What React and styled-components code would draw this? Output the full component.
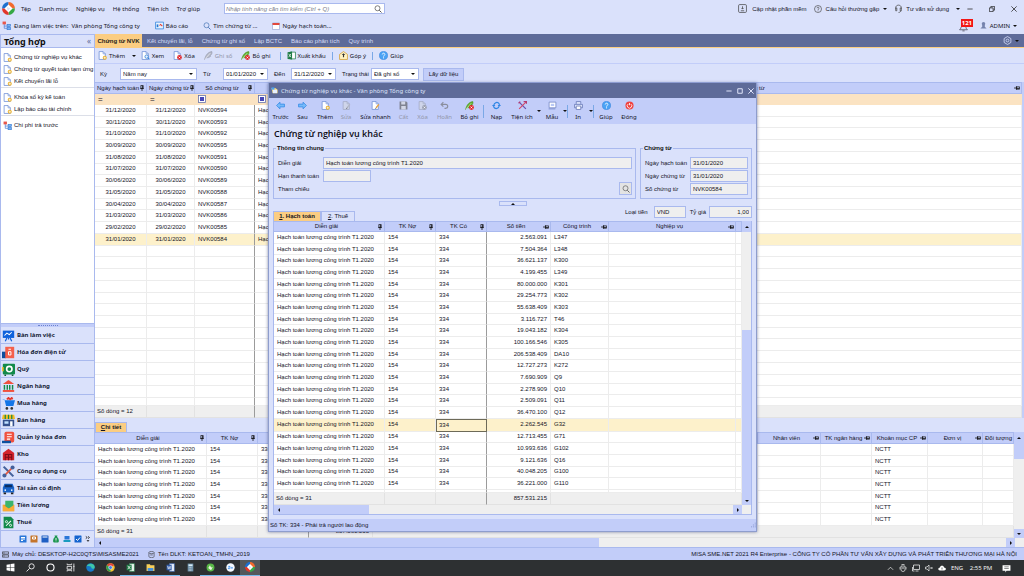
import React from "react";
import styled, { createGlobalStyle, css } from "styled-components";

const c = {
  light: "#dae1fb",
  blue: "#c2cdf9",
  line: "#a9b9ee",
  navy: "#5e6b99",
  orange: "#fbcd82",
  filter: "#fbe3c2",
  picked: "#fdf1cb",
  grey: "#efefef",
  cell: "#ececec",
  text: "#14141f",
  dim: "#9297ab",
};
const sans = `"Liberation Sans", Arial, sans-serif`;
const ui = `"Noto Sans", "Open Sans", sans-serif`;

const Global = createGlobalStyle`
  * { box-sizing: border-box; }
  body { margin: 0; background: ${c.light}; }
  button, input, select { font: inherit; color: inherit; margin: 0; }
  button { background: none; border: 0; padding: 0; white-space: nowrap; }
  svg { display: block; flex: none; }
`;

/* ---------- shell ---------- */
const Shell = styled.div`
  position: relative;
  display: flex;
  flex-direction: column;
  min-height: 100vh;
  overflow: hidden;
  background: ${c.light};
  color: ${c.text};
  font: 6px/10px ${sans};
`;
const TopRow = styled.div`
  display: flex;
  align-items: center;
  height: 17px;
  padding: 0 7px 0 2px;
  white-space: nowrap;
  font-family: ${ui};
`;
const MenuBar = styled.nav`
  display: flex;
  gap: 8px;
  margin-left: 6px;
  width: 203px;
`;
const SearchBox = styled.label`
  display: flex;
  align-items: center;
  width: 161px;
  height: 11px;
  padding: 0 2px 0 1px;
  background: #fff;
  border: 1px solid ${c.line};
  font-family: ${sans};
  input {
    flex: 1;
    min-width: 0;
    height: 9px;
    padding: 0;
    border: 0;
    outline: 0;
    font-style: italic;
  }
  input::placeholder { color: #777b8a; }
`;
const Group = styled.div`
  display: flex;
  align-items: center;
  gap: ${(p) => p.$gap || 0}px;
  margin-left: ${(p) => (p.$end ? "auto" : "0")};
`;
const SupportGroup = styled(Group)`
  font-family: ${sans};
`;
const IconButton = styled.button`
  display: flex;
  align-items: center;
  gap: ${(p) => p.$gap || 2}px;
  color: ${(p) => (p.disabled ? c.dim : "inherit")};
`;
const Caret = styled.i`
  flex: none;
  width: 0;
  height: 0;
  border: 2px solid transparent;
  border-bottom-width: 0;
  border-top-color: #111;
  ${(p) => p.$dir === "up" && css`transform: rotate(180deg);`}
  ${(p) => p.$dir === "left" && css`transform: rotate(90deg);`}
  ${(p) => p.$dir === "right" && css`transform: rotate(-90deg);`}
`;
const Bell = styled.span`
  position: relative;
  width: 22px;
  height: 14px;
  svg { position: absolute; left: 1px; top: 4px; }
  b {
    position: absolute;
    left: 3px;
    top: 0;
    padding: 0 1px;
    background: #f21616;
    color: #fff;
    font: bold 6px/8px ${ui};
  }
`;
const Main = styled.div`
  flex: 1;
  display: grid;
  grid-template-columns: 95px minmax(0, 1fr);
`;

/* ---------- sidebar ---------- */
const Side = styled.aside`
  display: flex;
  flex-direction: column;
  background: #fff;
  border: solid ${c.line};
  border-width: 1px 1px 0 1px;
`;
const SideHead = styled.h2`
  display: flex;
  align-items: center;
  justify-content: space-between;
  height: 13px;
  margin: 0;
  padding: 0 3px;
  background: ${c.light};
  color: #111;
  font: bold 9px/13px ${ui};
  border-bottom: 1px solid ${c.line};
  span { color: ${c.navy}; font: 8px/12px ${ui}; }
`;
const SideGroup = styled.div`
  padding: 3px 0 0 2px;
  border-bottom: ${(p) => (p.$last ? "0" : "1px solid #dcdfe8")};
`;
const SideLink = styled.a`
  display: flex;
  align-items: center;
  gap: 2px;
  height: 12px;
  color: ${c.text};
  text-decoration: none;
  white-space: nowrap;
`;
const Spacer = styled.div`
  flex: 1;
`;
const Grip = styled.div`
  display: flex;
  justify-content: center;
  height: 4px;
  padding-top: 1px;
  background: ${c.blue};
  border-top: 1px solid ${c.line};
  &::after { content: ""; width: 20px; border-top: 1px dotted #6c82cf; }
`;
const ModuleButton = styled.button`
  display: flex;
  align-items: center;
  gap: 2px;
  height: 17px;
  padding-left: 1px;
  background: ${c.light};
  border-bottom: 1px solid ${c.line};
  color: #151c36;
  font: bold 6px/10px ${ui};
  text-align: left;
`;
const MiniBar = styled.div`
  display: flex;
  justify-content: flex-end;
  align-items: center;
  gap: 3px;
  height: 16px;
  padding: 0 3px 0 0;
  background: ${c.light};
`;

/* ---------- workspace ---------- */
const Work = styled.main`
  display: flex;
  flex-direction: column;
  min-width: 0;
`;
const TabBar = styled.div`
  display: flex;
  align-items: center;
  gap: 9px;
  height: 14px;
  padding-right: 5px;
  background: ${c.navy};
  color: #d5dcf7;
  border-bottom: 1px solid ${c.orange};
`;
const MainTab = styled.button`
  height: 13px;
  ${(p) =>
    p.$on &&
    css`
      width: 47px;
      margin-right: -4px;
      background: ${c.orange};
      color: #1d1d1d;
      font-weight: bold;
    `}
`;
const Tools = styled.div`
  display: flex;
  align-items: center;
  gap: 9px;
  height: 16px;
  padding-left: 3px;
  border-bottom: 1px solid ${c.blue};
  font-family: ${ui};
`;
const Bar = styled.i`
  width: 1px;
  height: ${(p) => p.$h || 8}px;
  background: #7ba8e6;
`;
const Filters = styled.form`
  display: flex;
  align-items: center;
  gap: 6px;
  height: 18px;
  padding: 2px 0 0 5px;
`;
const Field = styled.label`
  display: flex;
  align-items: center;
  span { width: ${(p) => p.$label}px; white-space: nowrap; }
`;
const SelectBox = styled.div`
  display: flex;
  align-items: center;
  width: ${(p) => p.$w}px;
  height: 12px;
  padding-right: 3px;
  background: #fff;
  border: 1px solid ${c.line};
  select {
    flex: 1;
    min-width: 0;
    height: 10px;
    padding: 0 0 0 2px;
    border: 0;
    outline: 0;
    appearance: none;
    background: transparent;
  }
`;
const LoadButton = styled.button`
  width: 41px;
  height: 13px;
  margin-left: -2px;
  background: ${c.blue};
  border: 1px solid ${c.line};
`;

/* ---------- data tables ---------- */
const Grid = styled.table`
  width: 100%;
  height: ${(p) => p.$h}px;
  table-layout: fixed;
  border-collapse: separate;
  border-spacing: 0;
  background: #fff;
  th, td {
    padding: 0 3px;
    overflow: hidden;
    white-space: nowrap;
    text-align: left;
    font-weight: normal;
    line-height: 9px;
    border-right: 1px solid ${c.cell};
    border-bottom: 1px solid ${c.cell};
  }
  thead th {
    height: ${(p) => p.$head}px;
    padding: 0 2px;
    background: ${c.blue};
    border-color: ${c.line};
    border-top: 1px solid ${c.line};
  }
  tfoot td {
    height: 12px;
    padding-left: 2px;
    background: ${c.grey};
    border-color: #e2e2e2;
  }
`;
const HeadCell = styled.div`
  display: flex;
  align-items: center;
  margin-right: -1px;
  span { flex: 1; text-align: center; }
`;
const Cell = styled.td`
  && {
    ${(p) => p.$align && css`text-align: ${p.$align};`}
    ${(p) => p.$dark && css`border-right-color: #9b9b9b;`}
    ${(p) => p.$focus && css`border: 1px solid #6d6a58; padding-left: 2px;`}
  }
`;
const Row = styled.tr`
  background: ${(p) => (p.$on ? c.picked : "transparent")};
`;
const FilterRow = styled.tr`
  background: ${c.filter};
  && td { height: 11px; border-color: ${c.filter}; font-size: 8px; }
`;
const FillRow = styled.tr`
  && td { height: ${(p) => p.$h}px; line-height: 1px; }
`;
const LeadTable = styled.div`
  border-right: 2px solid ${c.blue};
`;

const DetailTabs = styled.div`
  display: flex;
  align-items: flex-end;
  height: 14px;
`;
const TabLabel = styled.button`
  height: 10px;
  width: ${(p) => p.$w}px;
  border: 1px solid ${c.line};
  border-bottom: 0;
  background: ${(p) => (p.$on ? c.orange : c.light)};
  font-weight: ${(p) => (p.$on ? "bold" : "normal")};
  line-height: 9px;
`;
const Scrolled = styled.div`
  display: flex;
  flex: ${(p) => (p.$grow ? 1 : "none")};
  > :first-child { flex: 1; min-width: 0; }
`;
const VScroll = styled.div`
  display: flex;
  flex-direction: column;
  width: ${(p) => p.$w}px;
  background: ${c.grey};
`;
const HScroll = styled.div`
  display: flex;
  height: 9px;
  background: ${c.grey};
  padding-right: 9px;
`;
const Arrow = styled.button`
  display: flex;
  align-items: center;
  justify-content: center;
  width: ${(p) => p.$w || 9}px;
  height: ${(p) => p.$h || 9}px;
  background: ${c.blue};
`;
const Thumb = styled.i`
  flex: 0 0 ${(p) => p.$size};
  margin-top: ${(p) => p.$from || 0}px;
  background: ${c.blue};
`;

/* ---------- voucher window ---------- */
const Window = styled.section`
  position: absolute;
  left: 268px;
  right: 267px;
  top: 83px;
  display: flex;
  flex-direction: column;
  background: ${c.light};
  border: solid #8e9dcd;
  border-width: 0 1px 1px 1px;
  box-shadow: 0 0 3px rgba(50, 60, 110, 0.6);
`;
const TitleBar = styled.header`
  display: flex;
  align-items: center;
  gap: 3px;
  height: 15px;
  padding: 0 2px;
  background: ${c.navy};
  color: #dde3fa;
  font-family: ${ui};
`;
const Ribbon = styled.div`
  display: flex;
  height: 26px;
  padding-left: 1px;
  background: ${c.blue};
  align-items: center;
`;
const RibbonButton = styled.button`
  display: flex;
  flex-direction: column;
  align-items: center;
  gap: 2px;
  width: ${(p) => p.$w}px;
  color: ${(p) => (p.disabled ? c.dim : "inherit")};
  font-family: ${ui};
`;
const RibbonCaret = styled.button`
  display: flex;
  justify-content: center;
  width: ${(p) => p.$w}px;
`;
const Body = styled.div`
  padding: 0 4px 4px;
`;
const Heading = styled.h1`
  height: 20px;
  margin: 0;
  padding-left: 1px;
  color: #0c0c14;
  font: 600 9px/20px "Open Sans", ${ui};
`;
const Panels = styled.div`
  display: grid;
  grid-template-columns: minmax(0, 1fr) 112px;
  gap: 4px;
`;
const Panel = styled.fieldset`
  min-width: 0;
  height: 55px;
  margin: 0;
  padding: 4px 3px 0 4px;
  border: 1px solid ${c.line};
  legend { padding: 0 1px; margin-left: -2px; color: #111; font-weight: bold; line-height: 8px; }
`;
const FormRow = styled.div`
  display: grid;
  grid-template-columns: ${(p) => p.$label}px minmax(0, 1fr);
  align-items: center;
  height: 13px;
  white-space: nowrap;
`;
const Box = styled.input`
  width: ${(p) => p.$w || "100%"};
  height: 12px;
  padding: 0 2px;
  background: ${c.grey};
  border: 1px solid ${c.line};
  text-align: ${(p) => p.$align || "left"};
`;
const LookButton = styled.button`
  display: flex;
  align-items: center;
  justify-content: center;
  justify-self: end;
  width: 13px;
  height: 13px;
  background: #e3e3e3;
  border: 1px solid ${c.line};
`;
const Splitter = styled.div`
  display: flex;
  justify-content: center;
  align-items: flex-end;
  height: 7px;
  button {
    display: flex;
    align-items: center;
    justify-content: center;
    width: 28px;
    height: 5px;
    border: 1px solid ${c.line};
  }
`;
const SheetBar = styled.div`
  display: flex;
  align-items: flex-end;
  height: 15px;
`;
const Currency = styled.div`
  display: flex;
  gap: 4px;
  margin: 0 0 3px auto;
  label { display: flex; align-items: center; gap: 3px; }
  label:first-child { gap: 6px; }
`;
const Frame = styled.div`
  border: solid ${c.line};
  border-width: 0 1px 1px 1px;
`;
const WindowStatus = styled.footer`
  display: flex;
  align-items: center;
  justify-content: space-between;
  height: 12px;
  padding-left: 1px;
  background: ${c.blue};
`;

/* ---------- bottom bars ---------- */
const StatusBar = styled.footer`
  display: flex;
  align-items: center;
  gap: 3px;
  height: 13px;
  padding: 0 7px 0 2px;
  background: ${c.blue};
  border-top: 1px solid ${c.line};
  white-space: nowrap;
  span { margin-right: 6px; }
  span:last-child { margin: 0 0 0 auto; }
`;
const TaskBar = styled.footer`
  display: flex;
  align-items: center;
  height: 16px;
  background: #2d3032;
  color: #f2f2f2;
  font-family: ${ui};
`;
const TaskButton = styled.button`
  display: flex;
  align-items: center;
  justify-content: center;
  width: 20px;
  height: 16px;
  padding-bottom: 1px;
  border-bottom: 1px solid ${(p) => (p.$open ? "#76b9ed" : "transparent")};
  background: ${(p) => (p.$on ? "#53585c" : "transparent")};
`;
const Tray = styled.div`
  display: flex;
  align-items: center;
  gap: 5px;
  margin-left: auto;
  padding-right: 13px;
`;

/* ---------- drawings ---------- */
const Svg = ({ s = 8, w, children, ...r }) => (
  <svg width={w || s} height={s} viewBox="0 0 16 16" fill="none" aria-hidden="true" {...r}>{children}</svg>
);
const Doc = ({ mark = "plus", off }) => (
  <Svg s={9}>
    <path d="M2 1h7l4 4v10H2z" fill={off ? "#cfd5ea" : "#fff"} stroke={off ? "#a3abc6" : "#6f8fd6"} strokeWidth="1.4" />
    <path d="M9 1v4h4" stroke={off ? "#a3abc6" : "#6f8fd6"} strokeWidth="1.2" />
    {mark === "plus" && <><circle cx="12" cy="12" r="3.6" fill={off ? "#a3a8b8" : "#e9b02c"} /><path d="M12 10v4M10 12h4" stroke="#fff" strokeWidth="1.2" /></>}
    {mark === "look" && <><circle cx="10" cy="10" r="3" fill="#e6f2ff" stroke="#2f7fd6" strokeWidth="1.4" /><path d="M12 12l3 3" stroke="#2f7fd6" strokeWidth="1.8" /></>}
    {mark === "del" && <><circle cx="11.5" cy="11.5" r="4.2" fill={off ? "#9aa0b3" : "#e3262c"} /><path d="M10 10l3 3M13 10l-3 3" stroke="#fff" strokeWidth="1.3" /></>}
    {mark === "pen" && <><path d="M14 6l-5 6" stroke={off ? "#b3b8c8" : "#eaa33a"} strokeWidth="2.4" /><path d="M9 12l-1 2" stroke="#555" strokeWidth="1.4" /></>}
  </Svg>
);
const Tree = () => (
  <Svg s={9}>
    <path d="M4 5v8h5M4 9h5" stroke="#4d7fd6" strokeWidth="1.3" />
    <rect x="1" y="1" width="6" height="5" fill="#e8574a" />
    <rect x="9" y="6" width="6" height="4" fill="#74b3f3" stroke="#2a6fce" />
    <rect x="9" y="11.5" width="6" height="4" fill="#74b3f3" stroke="#2a6fce" />
  </Svg>
);
const Quill = ({ off }) => (
  <Svg s={9}>
    <path d="M1 15C3 7 7 2 14 1c1 4-1 6-3 7l1 1c-2 3-5 3-8 3z" fill={off ? "#b5b9c8" : "#5fae2e"} stroke={off ? "#9196a8" : "#4f9a24"} />
    <path d="M2 14L11 4" stroke="#fff" />
    {!off && <><circle cx="11.5" cy="11.5" r="4.3" fill="#e3262c" /><path d="M9.8 9.8l3.4 3.4M13.2 9.8l-3.4 3.4" stroke="#fff" strokeWidth="1.4" /></>}
  </Svg>
);
const Help = ({ s = 8 }) => (
  <Svg s={s}><circle cx="8" cy="8" r="7.2" fill="#4ba3f5" stroke="#2f7fdb" /><path d="M5.8 6.2c0-3 4.6-3 4.6 0C10.4 8 8 8 8 10" stroke="#fff" strokeWidth="1.5" /><circle cx="8" cy="12.2" r="1" fill="#fff" /></Svg>
);
const Lens = ({ s = 8, color = "#4e79b8" }) => (
  <Svg s={s}><circle cx="7" cy="6.5" r="5" stroke={color} strokeWidth="1.5" /><path d="M10.5 10.5L15 15" stroke={color} strokeWidth="2" /></Svg>
);
const Logo = ({ s = 13 }) => (
  <Svg s={s}>
    <path d="M8 8L8 0A8 8 0 0 0 0 8z" fill="#1c6fd0" /><path d="M8 8L8 0A8 8 0 0 1 16 8z" fill="#f26a2e" />
    <path d="M8 8H16A8 8 0 0 1 8 16z" fill="#36a845" /><path d="M8 8H0A8 8 0 0 0 8 16z" fill="#e2372c" />
    <path d="M8 3l5 5-5 5-5-5z" fill="#fff" /><path d="M6 6l4 2-3 3z" fill="#dae1fb" />
  </Svg>
);
const Arr = ({ flip }) => (
  <Svg s={9}><path d={flip ? "M15 8L9 2v3.5H1v5h8V14z" : "M1 8L7 2v3.5h8v5H7V14z"} fill="#76bafa" stroke="#2f86e4" strokeWidth="1.3" /></Svg>
);
const Pin = ({ side }) => (
  <Svg s={6}>
    <g transform={side ? "rotate(90 8 8)" : undefined}>
      <path d="M5 1h6v8H5z" stroke="#111" strokeWidth="2" /><path d="M3 9.5h10M8 10v6M9.5 2v7" stroke="#111" strokeWidth="2" />
    </g>
  </Svg>
);
const FilterMark = () => (
  <Svg><rect x="1" y="1" width="14" height="14" fill="#fff" stroke="#5b6aa8" strokeWidth="1.5" /><rect x="4" y="4" width="8" height="8" fill="#4747b8" /></Svg>
);
const Mini = ({ color, d }) => <Svg s={8}><rect x="1" y="1" width="14" height="14" rx="1" fill={color} /><path d={d} stroke="#fff" strokeWidth="2" /></Svg>;

const moduleArt = {
  desk: <><rect x="1" y="2" width="14" height="9" fill="#0f62dc" /><path d="M3 8l3-3 3 2 3-3" stroke="#fff" strokeWidth="1.3" /><path d="M8 11v2M4 15l2-4M12 15l-2-4" stroke="#0f62dc" strokeWidth="1.5" /></>,
  einv: <><rect x="0" y="7" width="5" height="8" fill="#0d4f9e" /><rect x="4" y="1" width="11" height="14" fill="#f4604c" /><path d="M8 4h3M8 7h3v4H8z" stroke="#fff" strokeWidth="1.2" /></>,
  safe: <><rect x="1" y="1" width="15" height="13" rx="1" fill="#128a4a" /><circle cx="9" cy="7.5" r="3.3" stroke="#fff" strokeWidth="2" /><path d="M0 5h2v5H0" fill="#f6c132" /><path d="M3 14h2v2H3zM12 14h2v2h-2z" fill="#0b5c30" /></>,
  bank: <><path d="M8 0l7 5H1z" fill="#f0513f" /><path d="M3 6v6M6.500 6v6M9.500 6v6M13 6v6" stroke="#128a4a" strokeWidth="1.8" /><path d="M1 13.5h14" stroke="#f0513f" strokeWidth="2.4" /></>,
  cart: <><path d="M0 3h3l2 8h9l2-7H4z" fill="#1476e8" /><path d="M6 3l2-2 2 2 2-2 1 2" stroke="#e2372c" strokeWidth="2" /><circle cx="6" cy="14" r="1.6" fill="#333" /><circle cx="12" cy="14" r="1.6" fill="#333" /></>,
  shop: <><path d="M1 1h14l1 5H0z" fill="#f5b921" /><path d="M4 1v5M8 1v5M12 1v5" stroke="#128a4a" strokeWidth="1.5" /><rect x="1" y="7" width="14" height="8" fill="#35508c" /><rect x="3" y="9" width="5" height="3" fill="#bfe0ff" /><rect x="10" y="9" width="3" height="6" fill="#fff" /></>,
  inv: <><rect x="3" y="1" width="12" height="13" rx="2" fill="#f0513f" /><path d="M6 4h6M6 7h6M6 10h4" stroke="#fff" strokeWidth="1.3" /><path d="M0 12h11v3H0z" fill="#0d4f9e" /></>,
  ware: <><path d="M8 1l7 5v9H1V6z" fill="#d3242c" /><path d="M4 15V8h8v7M4 11.5h8M8 8v7" stroke="#7c0c18" strokeWidth="1.3" /></>,
  tool: <><path d="M2 2l12 12" stroke="#44619c" strokeWidth="2.6" /><path d="M14 2L3 13" stroke="#e4593f" strokeWidth="2" /><circle cx="13" cy="3" r="2.5" fill="#44619c" /><circle cx="3" cy="13" r="2.5" fill="#44619c" /></>,
  car: <><path d="M3 2h10l2 5v6H1V7z" fill="#1763c9" /><path d="M4 3.5h8l1 3H3z" fill="#0a2f66" /><path d="M2 13h3v2H2zM11 13h3v2h-3z" fill="#222" /><circle cx="4" cy="10" r="1" fill="#fff" /><circle cx="12" cy="10" r="1" fill="#fff" /></>,
  pay: <><path d="M1 7h14v8H1z" fill="#f39a1e" /><path d="M4 2h10v8l-5 2-5-3z" fill="#3bb46c" /><path d="M1 7l7 5 7-5v8H1z" fill="#f8ac38" /></>,
  tax: <><path d="M2 1h9l3 3v11H2z" fill="#128a4a" /><path d="M5 12l6-6" stroke="#fff" strokeWidth="1.3" /><circle cx="5.5" cy="7" r="1.3" stroke="#fff" /><circle cx="10.5" cy="11.5" r="1.3" stroke="#fff" /></>,
};

/* ---------- data ---------- */
const modules = [
  ["desk", "Bàn làm việc"], ["einv", "Hóa đơn điện tử"], ["safe", "Quỹ"], ["bank", "Ngân hàng"],
  ["cart", "Mua hàng"], ["shop", "Bán hàng"], ["inv", "Quản lý hóa đơn"], ["ware", "Kho"],
  ["tool", "Công cụ dụng cụ"], ["car", "Tài sản cố định"], ["pay", "Tiền lương"], ["tax", "Thuế"],
];
const vouchers = [
  ["31/12/2020", "NVK00594"], ["30/11/2020", "NVK00593"], ["31/10/2020", "NVK00592"], ["30/09/2020", "NVK00595"],
  ["31/08/2020", "NVK00591"], ["31/07/2020", "NVK00590"], ["30/06/2020", "NVK00589"], ["31/05/2020", "NVK00588"],
  ["30/04/2020", "NVK00587"], ["31/03/2020", "NVK00586"], ["29/02/2020", "NVK00585"], ["31/01/2020", "NVK00584"],
];
const entries = [
  ["2.563.091", "L347"], ["7.504.364", "L348"], ["36.621.137", "K300"], ["4.199.455", "L349"], ["80.000.000", "K301"],
  ["29.254.773", "K302"], ["55.638.409", "K303"], ["3.116.727", "T46"], ["19.043.182", "K304"], ["100.166.546", "K305"],
  ["206.538.409", "DA10"], ["12.727.273", "K272"], ["7.690.909", "Q9"], ["2.278.909", "Q10"], ["2.509.091", "Q11"],
  ["36.470.100", "Q12"], ["2.262.545", "G32"], ["12.713.455", "G71"], ["10.993.636", "G102"], ["9.121.636", "Q16"],
  ["40.048.205", "G100"], ["36.221.000", "G110"],
];
const memo = "Hạch toán lương công trình T1.2020";

const Cols = ({ w }) => <colgroup>{w.map((x, i) => <col key={i} style={x ? { width: x } : undefined} />)}</colgroup>;
const Head = ({ children, side, pin = true }) => (
  <th scope="col"><HeadCell><span>{children}</span>{pin && <Pin side={side} />}</HeadCell></th>
);
const Choice = ({ w, label, lw, value }) => (
  <Field $label={lw}><span>{label}</span><SelectBox $w={w}><select defaultValue={value}><option>{value}</option></select><Caret /></SelectBox></Field>
);

function Sidebar() {
  return (
    <Side>
      <SideHead>Tổng hợp <span>«</span></SideHead>
      <SideGroup>
        {["Chứng từ nghiệp vụ khác", "Chứng từ quyết toán tạm ứng", "Kết chuyển lãi lỗ"].map((t) => <SideLink href="#" key={t}><Doc />{t}</SideLink>)}
      </SideGroup>
      <SideGroup>
        {["Khóa sổ kỳ kế toán", "Lập báo cáo tài chính"].map((t) => <SideLink href="#" key={t}><Doc />{t}</SideLink>)}
      </SideGroup>
      <SideGroup $last><SideLink href="#"><Tree />Chi phí trả trước</SideLink></SideGroup>
      <Spacer />
      <Grip />
      {modules.map(([k, t]) => <ModuleButton key={k}><Svg s={13}>{moduleArt[k]}</Svg>{t}</ModuleButton>)}
      <MiniBar>
        <Mini color="#2a77d8" d="M4 5h8M4 8h8M4 11h4" /><Mini color="#c4742b" d="M5 4h6v4H5z" /><Mini color="#1f5fc4" d="M3 4h10" />
        <Svg><path d="M5 1h6l-1 3c4 2 5 11 2 11H4C1 15 2 6 6 4z" fill="#1c9650" /><path d="M8 6v7M6 8h4" stroke="#fff" /></Svg>
        <Svg><rect x="3" y="2" width="10" height="7" fill="#2a77d8" /><path d="M1 10h14v4H1z" fill="#1a9bc0" /></Svg>
        <Mini color="#1464cf" d="M4 8l3 3 5-6" />
        <Svg w={6}><path d="M2 1l4 3-4 3M8 1l4 3-4 3" stroke="#111" strokeWidth="2" /><path d="M4 11h8l-4 4z" fill="#111" /></Svg>
      </MiniBar>
    </Side>
  );
}

function VoucherList() {
  return (
    <LeadTable>
      <Grid $h={336} $head={12}>
        <Cols w={[52, 48, 60, 221, 0]} />
        <thead><tr><Head>Ngày hạch toán</Head><Head>Ngày chứng từ</Head><Head>Số chứng từ</Head><Head>Diễn giải</Head><Head side>Loại chứng từ</Head></tr></thead>
        <tbody>
          <FilterRow><td>=</td><td>=</td><td><FilterMark /></td><td><FilterMark /></td><td /></FilterRow>
          {vouchers.map(([d, n]) => (
            <Row key={n} $on={n === "NVK00584"}>
              <Cell $align="center">{d}</Cell><Cell $align="center">{d}</Cell><Cell $dark>{n}</Cell><td>Hạch toán lương công trình</td><td />
            </Row>
          ))}
          {Array.from({ length: 13 }, (_, i) => <Row key={i}><td>&nbsp;</td><td /><Cell $dark /><td /><td /></Row>)}
          <FillRow $h={8}><td /><td /><Cell $dark /><td /><td /></FillRow>
        </tbody>
        <tfoot><tr><td>Số dòng = 12</td><td /><Cell $dark /><td /><td /></tr></tfoot>
      </Grid>
    </LeadTable>
  );
}

function DetailList() {
  return (
    <>
      <DetailTabs><TabLabel $on $w={32}><u>C</u>hi tiết</TabLabel></DetailTabs>
      <Scrolled $grow>
        <Grid $h={106} $head={12}>
          <Cols w={[112, 51, 51, 64, 0, 63, 51, 56, 55, 31]} />
          <thead><tr>
            <Head>Diễn giải</Head><Head>TK Nợ</Head><Head>TK Có</Head><Head side>Số tiền</Head><Head side>Công trình</Head>
            <Head side>Nhân viên</Head><Head side>TK ngân hàng</Head><Head side>Khoản mục CP</Head><Head side>Đơn vị</Head><Head pin={false}>Đối tượng</Head>
          </tr></thead>
          <tbody>
            {entries.slice(0, 7).map(([a, p]) => (
              <Row key={p}><td>{memo}</td><td>154</td><Cell $dark>334</Cell><Cell $align="right">{a}</Cell><td /><td /><td /><td>NCTT</td><td /><td /></Row>
            ))}
          </tbody>
          <tfoot><tr><td>Số dòng = 31</td><td /><Cell $dark /><Cell $align="right">857.531.215</Cell><td colSpan={6} /></tr></tfoot>
        </Grid>
        <VScroll $w={10}><Arrow $w={10} $h={12}><Caret $dir="up" /></Arrow><Thumb $size="15px" /><Spacer /><Arrow $w={10}><Caret /></Arrow></VScroll>
      </Scrolled>
      <HScroll><Arrow><Caret $dir="left" /></Arrow><Thumb $size="53.8%" /><Spacer /><Arrow><Caret $dir="right" /></Arrow></HScroll>
    </>
  );
}

const RibbonItem = ({ w, t, off, children }) => <RibbonButton $w={w} disabled={off}>{children}{t}</RibbonButton>;

function Ribbons() {
  const R = RibbonItem;
  return (
    <Ribbon>
      <R w={21} t="Trước"><Arr /></R><R w={23} t="Sau"><Arr flip /></R><R w={22} t="Thêm"><Doc /></R>
      <R w={20} t="Sửa" off><Doc mark="pen" off /></R><R w={39} t="Sửa nhanh"><Doc mark="pen" /></R>
      <R w={17} t="Cất" off><Svg s={9}><path d="M1 1h12l2 2v12H1z" fill="#7f8391" /><path d="M4 1h7v5H4zM4 9h8v6H4z" fill="#d3d7e6" /></Svg></R>
      <R w={21} t="Xóa" off><Doc mark="del" off /></R>
      <R w={23} t="Hoãn" off><Svg s={9}><path d="M6 2L2 6l4 4M2 6h8c5 0 5 7 0 7H8" stroke="#8a8e9d" strokeWidth="2" /></Svg></R>
      <R w={27} t="Bỏ ghi"><Quill /></R><Bar $h={13} />
      <R w={25} t="Nạp"><Svg s={9}><path d="M13 5C10 1 4 2 3 8M3 11c3 4 9 3 10-3" stroke="#2f86e4" strokeWidth="2.2" /><path d="M0 7l3 4 3-4zM16 9l-3-4-3 4z" fill="#2f86e4" /></Svg></R>
      <R w={26} t="Tiện ích"><Svg s={9}><path d="M2 2l12 12" stroke="#6b4fb0" strokeWidth="2.2" /><path d="M14 2L2 14" stroke="#d64562" strokeWidth="2" /><path d="M10 1h5v4M1 4l3-3" stroke="#b13a72" strokeWidth="2" /></Svg></R>
      <RibbonCaret $w={7} aria-label="Tiện ích"><Caret /></RibbonCaret>
      <R w={20} t="Mẫu"><Svg s={9}><path d="M2 2h12v10H2z" fill="#fff" stroke="#6c7fc0" strokeWidth="1.3" /><path d="M5 5h6v4H5z" fill="#b8c8f5" /><path d="M1 14h12" stroke="#6c7fc0" strokeWidth="1.3" /></Svg></R>
      <RibbonCaret $w={5} aria-label="Mẫu"><Caret /></RibbonCaret><Bar $h={13} />
      <R w={20} t="In"><Svg s={9}><path d="M4 5V1h8v4M1 6h14v6H1z" fill="#dfe6fb" stroke="#5d6fb0" strokeWidth="1.3" /><path d="M4 9h8v6H4z" fill="#fff" stroke="#5d6fb0" strokeWidth="1.3" /></Svg></R>
      <RibbonCaret $w={5} aria-label="In"><Caret /></RibbonCaret><Bar $h={13} />
      <R w={24} t="Giúp"><Help s={9} /></R>
      <R w={22} t="Đóng"><Svg s={9}><circle cx="8" cy="8" r="7.2" fill="#f0423f" /><path d="M5.5 5.5a4 4 0 1 0 5 0M8 3.5v4" stroke="#fff" strokeWidth="1.5" /></Svg></R>
    </Ribbon>
  );
}

function VoucherWindow() {
  return (
    <Window aria-label="Chứng từ nghiệp vụ khác">
      <TitleBar>
        <Svg s={7}><path d="M1 2h9l5 4v8H4z" fill="#f7d566" /><path d="M4 6h10v8H4z" fill="#e8f1ff" /><path d="M1 1h7v5H1z" fill="#4aa0f0" /></Svg>
        Chứng từ nghiệp vụ khác - Văn phòng Tổng công ty
        <Group $end $gap={5}>
          <IconButton aria-label="Thu nhỏ"><Svg s={6}><path d="M1 8h14" stroke="#e6ebff" strokeWidth="2.5" /></Svg></IconButton>
          <IconButton aria-label="Phóng to"><Svg s={6}><path d="M2 2h12v12H2z" stroke="#e6ebff" strokeWidth="2.5" /></Svg></IconButton>
          <IconButton aria-label="Đóng"><Svg s={6}><path d="M1 1l14 14M15 1L1 15" stroke="#e6ebff" strokeWidth="2.5" /></Svg></IconButton>
        </Group>
      </TitleBar>
      <Ribbons />
      <Body>
        <Heading>Chứng từ nghiệp vụ khác</Heading>
        <Panels>
          <Panel>
            <legend>Thông tin chung</legend>
            <FormRow $label={45}><label htmlFor="memo">Diễn giải</label><Box id="memo" readOnly value={memo} /></FormRow>
            <FormRow $label={45}><label htmlFor="due">Hạn thanh toán</label><Box id="due" $w="48px" readOnly value="" /></FormRow>
            <FormRow $label={45}><span>Tham chiếu</span><LookButton aria-label="Tham chiếu"><Lens color="#666" /></LookButton></FormRow>
          </Panel>
          <Panel>
            <legend>Chứng từ</legend>
            <FormRow $label={45}><label htmlFor="d1">Ngày hạch toán</label><Box id="d1" readOnly value="31/01/2020" /></FormRow>
            <FormRow $label={45}><label htmlFor="d2">Ngày chứng từ</label><Box id="d2" readOnly value="31/01/2020" /></FormRow>
            <FormRow $label={45}><label htmlFor="no">Số chứng từ</label><Box id="no" readOnly value="NVK00584" /></FormRow>
          </Panel>
        </Panels>
        <Splitter><button aria-label="Thu gọn"><Caret $dir="up" /></button></Splitter>
        <SheetBar>
          <TabLabel $on $w={48}><u>1</u>. Hạch toán</TabLabel><TabLabel $w={34}><u>2</u>. Thuế</TabLabel>
          <Currency>
            <label>Loại tiền <Box $w="32px" readOnly value="VND" /></label>
            <label>Tỷ giá <Box $w="43px" $align="right" readOnly value="1,00" /></label>
          </Currency>
        </SheetBar>
        <Frame>
          <Scrolled>
            <Grid $h={284} $head={11}>
              <Cols w={[111, 51, 51, 64, 58, 0, 6]} />
              <thead><tr><Head>Diễn giải</Head><Head>TK Nợ</Head><Head>TK Có</Head><Head side>Số tiền</Head><Head side>Công trình</Head><Head side>Nghiệp vụ</Head><Head pin={false} /></tr></thead>
              <tbody>
                {entries.map(([a, p]) => (
                  <Row key={p} $on={p === "G32"}>
                    <td>{memo}</td><td>154</td><Cell $dark $focus={p === "G32"}>334</Cell><Cell $align="right">{a}</Cell><td>{p}</td><td /><td />
                  </Row>
                ))}
                <FillRow $h={3}><td /><td /><Cell $dark /><td /><td /><td /><td /></FillRow>
              </tbody>
              <tfoot><tr><td>Số dòng = 31</td><td /><Cell $dark /><Cell $align="right">857.531.215</Cell><td colSpan={3} /></tr></tfoot>
            </Grid>
            <VScroll $w={9}><Arrow $h={11}><Caret $dir="up" /></Arrow><Thumb $from={98} $size="166px" /><Spacer /><Arrow><Caret /></Arrow></VScroll>
          </Scrolled>
          <HScroll><Arrow><Caret $dir="left" /></Arrow><Thumb $size="86px" /><Spacer /><Arrow><Caret $dir="right" /></Arrow></HScroll>
        </Frame>
      </Body>
      <WindowStatus>Số TK: 334 - Phải trả người lao động
        <Svg s={6}><path d="M14 2v2M14 7v2M14 12v2M9 7v2M9 12v2M4 12v2" stroke="#6678b8" strokeWidth="2" /></Svg>
      </WindowStatus>
    </Window>
  );
}

export default function App() {
  return (
    <Shell>
      <Global />
      <TopRow>
        <Logo />
        <MenuBar>{["Tệp", "Danh mục", "Nghiệp vụ", "Hệ thống", "Tiện ích", "Trợ giúp"].map((m) => <button key={m}>{m}</button>)}</MenuBar>
        <SearchBox><input aria-label="Tìm kiếm" placeholder="Nhập tính năng cần tìm kiếm (Ctrl + Q)" /><Lens color="#555" /></SearchBox>
        <SupportGroup $end $gap={7}>
          <IconButton $gap={5}><Svg s={9}><rect x="1" y="1" width="14" height="14" rx="2" stroke="#444" strokeWidth="1.3" /><path d="M8 4v5M6 7l2 2 2-2M5 12h6" stroke="#444" strokeWidth="1.3" /></Svg>Cập nhật phần mềm</IconButton>
          <IconButton $gap={4}><Svg s={8}><circle cx="8" cy="8" r="7" stroke="#444" strokeWidth="1.3" /><path d="M6 6.5c0-3 4-3 4 0C10 8 8 8 8 10M8 11v1.5" stroke="#444" strokeWidth="1.3" /></Svg>Câu hỏi thường gặp <Caret /></IconButton>
          <IconButton $gap={3}><Svg s={9}><path d="M3 8C2 0 14 0 13 8M3 7h2v5H3zM11 7h2v5h-2zM12 12c0 2-2 3-4 3" stroke="#444" strokeWidth="1.3" /></Svg>Tư vấn sử dụng</IconButton>
          <Caret />
          <Group $gap={16}>
            <IconButton aria-label="Thu nhỏ"><Svg s={6}><path d="M1 8h14" stroke="#222" strokeWidth="2" /></Svg></IconButton>
            <IconButton aria-label="Khôi phục"><Svg s={6}><path d="M1 5h10v10H1zM5 5V1h10v10h-4" stroke="#222" strokeWidth="2" /></Svg></IconButton>
            <IconButton aria-label="Đóng"><Svg s={6}><path d="M1 1l14 14M15 1L1 15" stroke="#222" strokeWidth="2" /></Svg></IconButton>
          </Group>
        </SupportGroup>
      </TopRow>
      <TopRow>
        <Group $gap={15}>
          <IconButton $gap={3}><Tree />Đang làm việc trên: &nbsp;Văn phòng Tổng công ty</IconButton>
          <IconButton><Svg s={9}><path d="M1 2h14v12H1z" fill="#e7f3ff" stroke="#3d8be0" strokeWidth="1.5" /><path d="M3 6h3v5H3z" fill="#2878d0" /><path d="M8 8l2-2 3 3" stroke="#e2372c" strokeWidth="1.8" /></Svg>Báo cáo</IconButton>
          <IconButton><Lens />Tìm chứng từ ...</IconButton>
          <IconButton><Svg><path d="M1 2h14v13H1z" fill="#fff" stroke="#7d8fc7" /><path d="M1 2h14v4H1z" fill="#e2483d" /></Svg>Ngày hạch toán...</IconButton>
        </Group>
        <Group $end>
          <Bell><Svg s={9}><path d="M1 12c3-1 2-8 7-8s4 7 7 8zM6 14h4" stroke="#556" strokeWidth="1.5" /></Svg><b>121</b></Bell>
          <IconButton $gap={3}><Svg s={7}><circle cx="8" cy="4" r="4" fill="#7583ad" /><path d="M5 7h6v4l4 4H1l4-4z" fill="#7583ad" /></Svg>ADMIN<Caret /></IconButton>
        </Group>
      </TopRow>
      <Main>
        <Sidebar />
        <Work>
          <TabBar>
            <MainTab $on>Chứng từ NVK</MainTab>
            {["Kết chuyển lãi, lỗ", "Chứng từ ghi sổ", "Lập BCTC", "Báo cáo phân tích", "Quy trình"].map((t) => <MainTab key={t}>{t}</MainTab>)}
            <Group $end $gap={3}><Svg s={9}><path d="M8 1l6 3.5v7L8 15l-6-3.5v-7z" stroke="#cfd8f7" strokeWidth="1.5" /><circle cx="8" cy="8" r="2.5" stroke="#cfd8f7" strokeWidth="1.5" /></Svg><Caret /></Group>
          </TabBar>
          <Tools>
            <Group $gap={5}>
              <IconButton><Doc />Thêm &nbsp;&nbsp;<Caret /></IconButton>
              <IconButton><Doc mark="look" />Xem</IconButton>
            </Group>
            <IconButton><Doc mark="del" />Xóa</IconButton>
            <IconButton disabled><Quill off />Ghi sổ</IconButton>
            <IconButton><Quill />Bỏ ghi</IconButton>
            <Group $gap={6}>
              <Bar />
              <IconButton><Svg s={9}><path d="M6 2h9v12H6z" fill="#fff" stroke="#1d7a44" strokeWidth="1.3" /><path d="M1 2l8-1v14l-8-1z" fill="#1d7a44" /><path d="M3 5l4 6M7 5l-4 6" stroke="#fff" strokeWidth="1.3" /></Svg>Xuất khẩu</IconButton>
              <Bar />
              <IconButton><Svg s={9}><path d="M1 6l7-5 7 5v9H1z" fill="#fff3c4" stroke="#d19a2a" strokeWidth="1.3" /><path d="M8 4l3 3H9v4H7V7H5z" fill="#333" /></Svg>Góp ý</IconButton>
              <Bar />
              <IconButton><Help s={9} />Giúp</IconButton>
            </Group>
          </Tools>
          <Filters>
            <Choice label="Kỳ" lw={20} w={77} value="Năm nay" />
            <Choice label="Từ" lw={20} w={45} value="01/01/2020" />
            <Choice label="Đến" lw={17} w={45} value="31/12/2020" />
            <Choice label="Trạng thái" lw={29} w={48} value="Đã ghi sổ" />
            <LoadButton type="button">Lấy dữ liệu</LoadButton>
          </Filters>
          <VoucherList />
          <DetailList />
        </Work>
      </Main>
      <StatusBar>
        <Svg s={7}><path d="M1 2h14v5H1zM1 9h14v5H1zM3 4.5h3M3 11.5h3" stroke="#333" strokeWidth="1.5" /></Svg><span>Máy chủ: DESKTOP-H2C0QTS\MISASME2021</span>
        <Svg s={7}><ellipse cx="8" cy="3.5" rx="6" ry="2.5" stroke="#333" strokeWidth="1.3" /><path d="M2 4v9c2 3 10 3 12 0V4M5 9h6" stroke="#333" strokeWidth="1.3" /></Svg><span>Tên DLKT: KETOAN_TMHN_2019</span>
        <span>MISA SME.NET 2021 R4 Enterprise - CÔNG TY CỔ PHẦN TƯ VẤN XÂY DỰNG VÀ PHÁT TRIỂN THƯƠNG MẠI HÀ NỘI</span>
      </StatusBar>
      <TaskBar>
        <TaskButton aria-label="Start"><Svg s={9}><path d="M1 3l6-1v5.500H1zM8 1.800L15 1v6.500H8zM1 8.500h6V14l-6-1zM8 8.500h7V15l-7-1z" fill="#fff" /></Svg></TaskButton>
        <TaskButton aria-label="Search"><Svg s={9}><circle cx="10" cy="6" r="4.6" stroke="#fff" strokeWidth="1.5" /><path d="M6.5 9.5L1 15" stroke="#fff" strokeWidth="1.5" /></Svg></TaskButton>
        <TaskButton aria-label="Cortana"><Svg s={9}><circle cx="8" cy="8" r="6.3" stroke="#fff" strokeWidth="2" /></Svg></TaskButton>
        <TaskButton aria-label="Task view"><Svg s={9}><path d="M2 1v2h8V1M2 6h8v5H2zM2 15v-2h8v2M14 1v14M13 6h2" stroke="#fff" strokeWidth="1.4" /></Svg></TaskButton>
        <TaskButton aria-label="Edge"><Svg s={9}><circle cx="8" cy="8" r="7.5" fill="#1579c9" /><path d="M1 6C4-1 15 0 15.5 7c0 4-5 4-6 2 1-3-4-5-8.500-3z" fill="#3fc6a8" /></Svg></TaskButton>
        <TaskButton aria-label="Chrome"><Svg s={9}><circle cx="8" cy="8" r="7.5" fill="#f4c430" /><path d="M8 8L1.5 4.2A7.5 7.5 0 0 1 14.5 4.2z" fill="#e0453a" /><path d="M8 8l-6.500-3.800A7.500 7.500 0 0 0 8 15.500z" fill="#2f9e50" /><circle cx="8" cy="8" r="3.3" fill="#3f7de8" stroke="#fff" /></Svg></TaskButton>
        <TaskButton aria-label="Excel" $open><Svg s={9}><path d="M6 1h9v14H6z" fill="#e8f5ec" stroke="#1d7a44" /><path d="M1 3h9v10H1z" fill="#1d7a44" /><path d="M3 5l5 6M8 5l-5 6" stroke="#fff" strokeWidth="1.4" /></Svg></TaskButton>
        <TaskButton aria-label="Explorer" $open><Svg s={9}><path d="M1 2h6l1 2h7v10H1z" fill="#f7cf5b" /><path d="M3 9h10v5H3z" fill="#3f8fe0" /></Svg></TaskButton>
        <TaskButton aria-label="Word" $open><Svg s={9}><path d="M6 1h9v14H6z" fill="#e4edfb" stroke="#2a57a5" /><path d="M1 3h9v10H1z" fill="#2a57a5" /><path d="M2.500 5l1.500 6 1.500-5 1.500 5 1.500-6" stroke="#fff" /></Svg></TaskButton>
        <TaskButton aria-label="Calculator"><Svg s={9}><path d="M3 1h10v14H3z" fill="#6c8fa8" /><path d="M4.500 2.500h7v3h-7z" fill="#d9edf7" /><path d="M5 8h6M5 11h6M5 13.500h6" stroke="#eee" strokeDasharray="1.5 1" /></Svg></TaskButton>
        <TaskButton aria-label="Globe" $open><Svg s={9}><circle cx="8" cy="8" r="7" fill="#59b847" /><path d="M4 9l3-5 2 4 3-1-3 6z" fill="#eef7e2" /></Svg></TaskButton>
        <TaskButton aria-label="Zalo" $open><Svg s={9}><circle cx="8" cy="8" r="7.5" fill="#f4f9ff" /><path d="M4 6h3l-3 4h3M9 7v3M11 7v3" stroke="#1778e8" strokeWidth="1.3" /></Svg></TaskButton>
        <TaskButton aria-label="MISA" $open $on><Logo s={10} /></TaskButton>
        <Tray>
          <Svg s={7}><path d="M2 11l6-6 6 6" stroke="#fff" strokeWidth="1.5" /></Svg>
          <Svg s={8}><path d="M4 4h8v8c0 4-8 4-8 0zM5 1h6M2 6v5M14 6v5" stroke="#fff" strokeWidth="1.3" /><circle cx="8" cy="8" r="1.5" fill="#fff" /></Svg>
          <Svg s={8}><path d="M3 2h12v9H3zM7 14h6M1 6v8h4" stroke="#fff" strokeWidth="1.4" /></Svg>
          <Svg s={8}><path d="M1 6h3l4-4v12l-4-4H1zM11 6l4 4M15 6l-4 4" stroke="#fff" strokeWidth="1.3" /></Svg>
          <Svg s={8}><path d="M4 13C-1 13 0 7 4 7c0-5 8-5 8 0 5 0 5 6 0 6z" fill="#fff" /><path d="M8 11V7" stroke="#2d3032" strokeWidth="1.4" /></Svg>
          <span>ENG</span><span>&nbsp;2:55 PM&nbsp;&nbsp;&nbsp;</span>
          <Svg s={9}><path d="M1 2h14v10H8l-2 3v-3H1z" fill="#fff" /><path d="M4 5h8M4 8h8" stroke="#2d3032" /></Svg>
        </Tray>
      </TaskBar>
      <VoucherWindow />
    </Shell>
  );
}
